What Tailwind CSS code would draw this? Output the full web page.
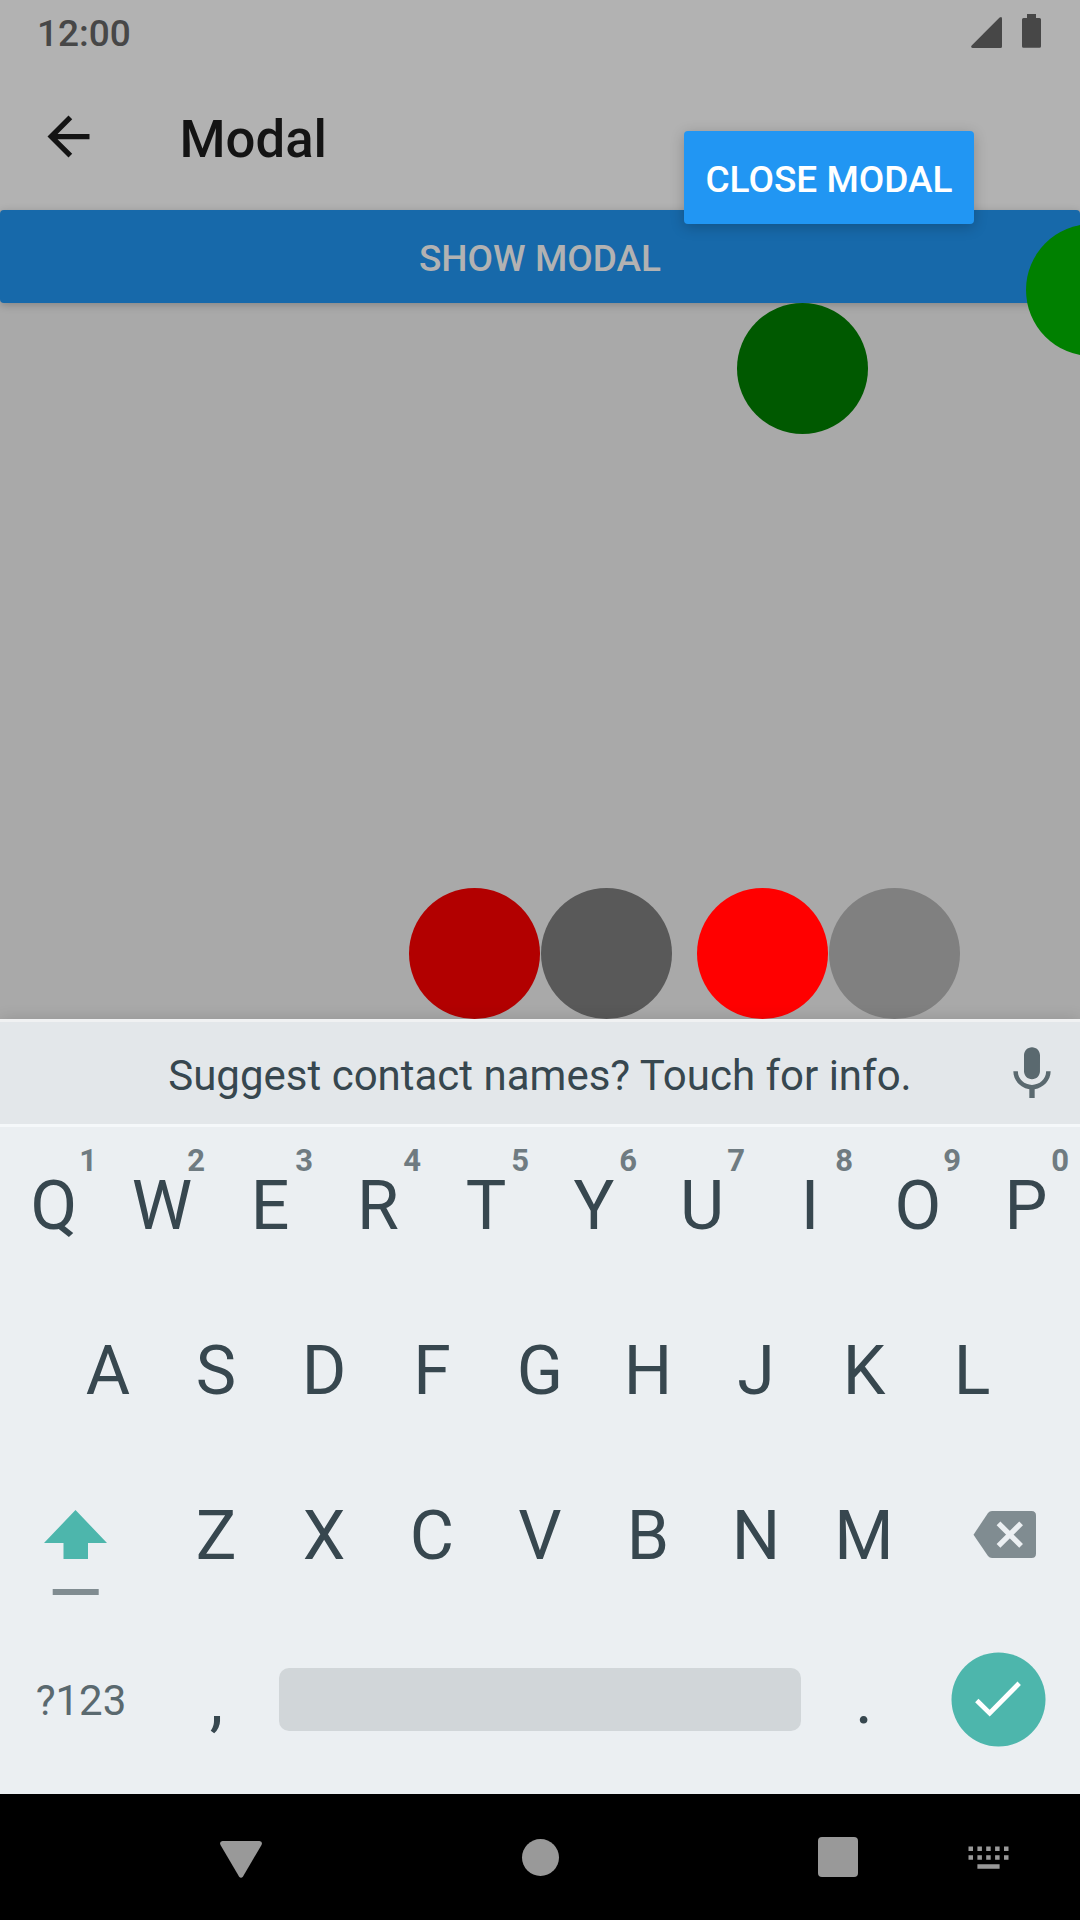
<!DOCTYPE html>
<html lang="en">
<head>
<meta charset="utf-8">
<title>Modal</title>
<script src="https://cdn.jsdelivr.net/npm/@tailwindcss/browser@4"></script>
</head>
<body class="bg-black">
<div class="relative flex h-[1920px] w-[1080px] flex-col overflow-hidden bg-[#a9a9a9] font-['Roboto',sans-serif]">

  <!-- Status bar and header -->
  <header class="h-[210px] shrink-0 bg-[#b2b2b2]">
    <div class="flex h-[63px] items-start justify-between pl-[37px] pr-[39px]">
      <span class="pt-px text-[37px] leading-[65px] font-medium text-[#474747]">12:00</span>
      <div class="flex gap-5 pt-[14px]">
        <svg class="h-[34px] w-[31px]" viewBox="0 0 31 34" fill="#474747"><path d="M28.6 3.5Q31 2 31 4.500V32.500Q31 34 29.500 34H1.500Q-.8 33.500.7 31.500Z"/></svg>
        <svg class="h-[34px] w-[19px]" viewBox="0 0 19 34" fill="#474747"><path d="M5 0h9v4h3.500Q19 4 19 5.500V32.200Q19 33.700 17.500 33.700H1.500Q0 33.700 0 32.200V5.500Q0 4 1.500 4H5Z"/></svg>
      </div>
    </div>
    <div class="flex h-[147px] items-start pl-[37px]">
      <svg class="mt-[42px] size-[63px]" viewBox="0 0 24 24" fill="#141414"><path d="M20 11H7.830l5.590-5.590L12 4l-8 8 8 8 1.410-1.410L7.830 13H20v-2z"/></svg>
      <h1 class="ml-[79.5px] text-[52.7px] leading-[152px] font-medium text-[#141414]">Modal</h1>
    </div>
  </header>

  <!-- Dimmed screen content -->
  <main class="h-[809px] shrink-0">
    <div class="flex h-[93px] items-center justify-center rounded-[4px] bg-[#1769aa] pt-[3px] text-[37px] leading-[37px] font-medium text-[#b2b2b2] shadow-[0_2px_9px_rgba(0,0,0,0.22)]">SHOW MODAL</div>
    <div class="relative h-[716px]">
      <div class="absolute top-0 left-[737px] size-[131px] rounded-full bg-[#005900]"></div>
      <div class="absolute bottom-0 left-[409px] flex gap-px">
        <div class="size-[131px] rounded-full bg-[#b20000]"></div>
        <div class="size-[131px] rounded-full bg-[#595959]"></div>
      </div>
      <div class="absolute bottom-0 left-[697px] flex gap-px">
        <div class="size-[131px] rounded-full bg-[#ff0000]"></div>
        <div class="size-[131px] rounded-full bg-[#808080]"></div>
      </div>
    </div>
  </main>

  <!-- Modal layer -->
  <div class="absolute top-[131px] left-[684px] flex h-[93px] w-[290px] items-center justify-center rounded-[4px] bg-[#2196f3] pt-[3px] text-[37px] leading-[37px] font-medium text-white shadow-[0_3px_14px_rgba(0,0,0,0.22)]">CLOSE MODAL</div>
  <div class="absolute top-[224px] left-[1026px] size-[132px] rounded-full bg-[#008000]"></div>

  <!-- Keyboard -->
  <section class="relative flex h-[775px] shrink-0 flex-col bg-[#ebeff2] text-[68px] text-[#37474f] shadow-[0_-1px_14px_rgba(0,0,0,0.12)]">
    <div class="flex h-[108px] shrink-0 items-center border-y-[3px] border-t-[#f0f1f2] border-b-[#f5f8fa] bg-[#e3e7ea]">
      <div class="w-24"></div>
      <p class="flex-1 pt-[5px] text-center text-[42px] leading-none whitespace-nowrap">Suggest contact names? Touch for info.</p>
      <div class="w-24 pt-[2px]"><svg class="ml-[15.5px] size-[64px]" viewBox="0 0 24 24" fill="#5a696f"><path d="M12 14c1.660 0 2.990-1.340 2.990-3L15 5c0-1.660-1.340-3-3-3S9 3.340 9 5v6c0 1.660 1.340 3 3 3zm5.300-3c0 3-2.540 5.100-5.300 5.100S6.700 14 6.700 11H5c0 3.410 2.720 6.230 6 6.720V21h2v-3.280c3.280-.48 6-3.300 6-6.720h-1.700z"/></svg></div>
    </div>

    <div class="grid h-[161px] shrink-0 grid-cols-10 text-center leading-[159px]">
      <div class="relative">Q<span class="absolute top-[17px] right-[11px] text-[31px] leading-[34px] font-bold text-[#6f7b81]">1</span></div>
      <div class="relative">W<span class="absolute top-[17px] right-[11px] text-[31px] leading-[34px] font-bold text-[#6f7b81]">2</span></div>
      <div class="relative">E<span class="absolute top-[17px] right-[11px] text-[31px] leading-[34px] font-bold text-[#6f7b81]">3</span></div>
      <div class="relative">R<span class="absolute top-[17px] right-[11px] text-[31px] leading-[34px] font-bold text-[#6f7b81]">4</span></div>
      <div class="relative">T<span class="absolute top-[17px] right-[11px] text-[31px] leading-[34px] font-bold text-[#6f7b81]">5</span></div>
      <div class="relative">Y<span class="absolute top-[17px] right-[11px] text-[31px] leading-[34px] font-bold text-[#6f7b81]">6</span></div>
      <div class="relative">U<span class="absolute top-[17px] right-[11px] text-[31px] leading-[34px] font-bold text-[#6f7b81]">7</span></div>
      <div class="relative">I<span class="absolute top-[17px] right-[11px] text-[31px] leading-[34px] font-bold text-[#6f7b81]">8</span></div>
      <div class="relative">O<span class="absolute top-[17px] right-[11px] text-[31px] leading-[34px] font-bold text-[#6f7b81]">9</span></div>
      <div class="relative">P<span class="absolute top-[17px] right-[11px] text-[31px] leading-[34px] font-bold text-[#6f7b81]">0</span></div>
    </div>

    <div class="grid h-[165px] shrink-0 grid-cols-9 px-[54px] text-center leading-[167px]">
      <div>A</div><div>S</div><div>D</div><div>F</div><div>G</div><div>H</div><div>J</div><div>K</div><div>L</div>
    </div>

    <div class="flex h-[165px] shrink-0 text-center leading-[167px]">
      <div class="w-[162px] pt-[57px] pl-[44px]"><svg class="h-[86px] w-[64px]" viewBox="0 0 64 86"><path fill="#4db6ac" d="M31.500 0 63 33H44V49H19.500V33H0Z"/><path fill="#808c91" d="M8.700 79h46v6h-46z"/></svg></div>
      <div class="grid w-[756px] grid-cols-7"><div>Z</div><div>X</div><div>C</div><div>V</div><div>B</div><div>N</div><div>M</div></div>
      <div class="w-[162px] pt-[58px] pl-[55px]"><svg class="h-12 w-[63px]" viewBox="0 0 63 48"><path fill="#808c91" d="M.5 23.700 15 2Q16.500 0 19 0H58.500Q63 0 63 4.500V42.500Q63 47 58.500 47H19Q16.500 47 15 45Z"/><path d="m25.500 12.300 22.600 22.600m0-22.600L25.500 34.900" stroke="#ebeff2" stroke-width="5.300"/></svg></div>
    </div>

    <div class="flex h-[176px] shrink-0 text-center leading-[165px]">
      <div class="w-[162px] text-[42px] text-[#5a696f]">?123</div>
      <div class="w-[108px] pl-px">,</div>
      <div class="w-[540px] px-[9px] pt-[50px]"><div class="h-[63px] rounded-[10px] bg-[#d1d6d9]"></div></div>
      <div class="w-[108px]">.</div>
      <div class="w-[162px] pt-[34px] pl-[33px]"><svg class="size-[95px]" viewBox="0 0 95 95"><circle cx="47.500" cy="47.500" r="47" fill="#4db6ac"/><path d="m25.800 48.500 12.900 12.600 29.500-29.800" fill="none" stroke="#fff" stroke-width="4.800"/></svg></div>
    </div>
  </section>

  <!-- Navigation bar -->
  <nav class="relative flex h-[126px] shrink-0 items-start bg-black">
    <svg class="mt-[47px] ml-[220px] h-[37px] w-[42px]" viewBox="0 0 42 37" fill="#999"><path d="M2.500 0H39.500Q43 .8 41.500 4L23 35.500Q21 38 19 35.500L.5 4Q-1 .8 2.500 0Z"/></svg>
    <div class="mt-[45px] ml-[260px] size-[37px] rounded-full bg-[#999]"></div>
    <div class="mt-[43px] ml-[259px] size-10 rounded-[4px] bg-[#999]"></div>
    <svg class="mt-[52px] ml-[110px] h-[23px] w-[41px]" viewBox="0 0 41 23" fill="#999"><path d="M.5.500h4.500v4.500H.5zM9.400.500h4.500v4.500H9.400zM18.200.500h4.500v4.500h-4.500zM27.100.500h4.500v4.500h-4.500zM36 .500h4.500v4.500H36zM.5 9.300h4.500v4.500H.5zM9.400 9.300h4.500v4.500H9.400zM18.200 9.300h4.500v4.500h-4.500zM27.100 9.300h4.500v4.500h-4.500zM36 9.300h4.500v4.500H36zM9.400 18.200h22.200v4.500H9.400z"/></svg>
  </nav>
</div>
</body>
</html>
